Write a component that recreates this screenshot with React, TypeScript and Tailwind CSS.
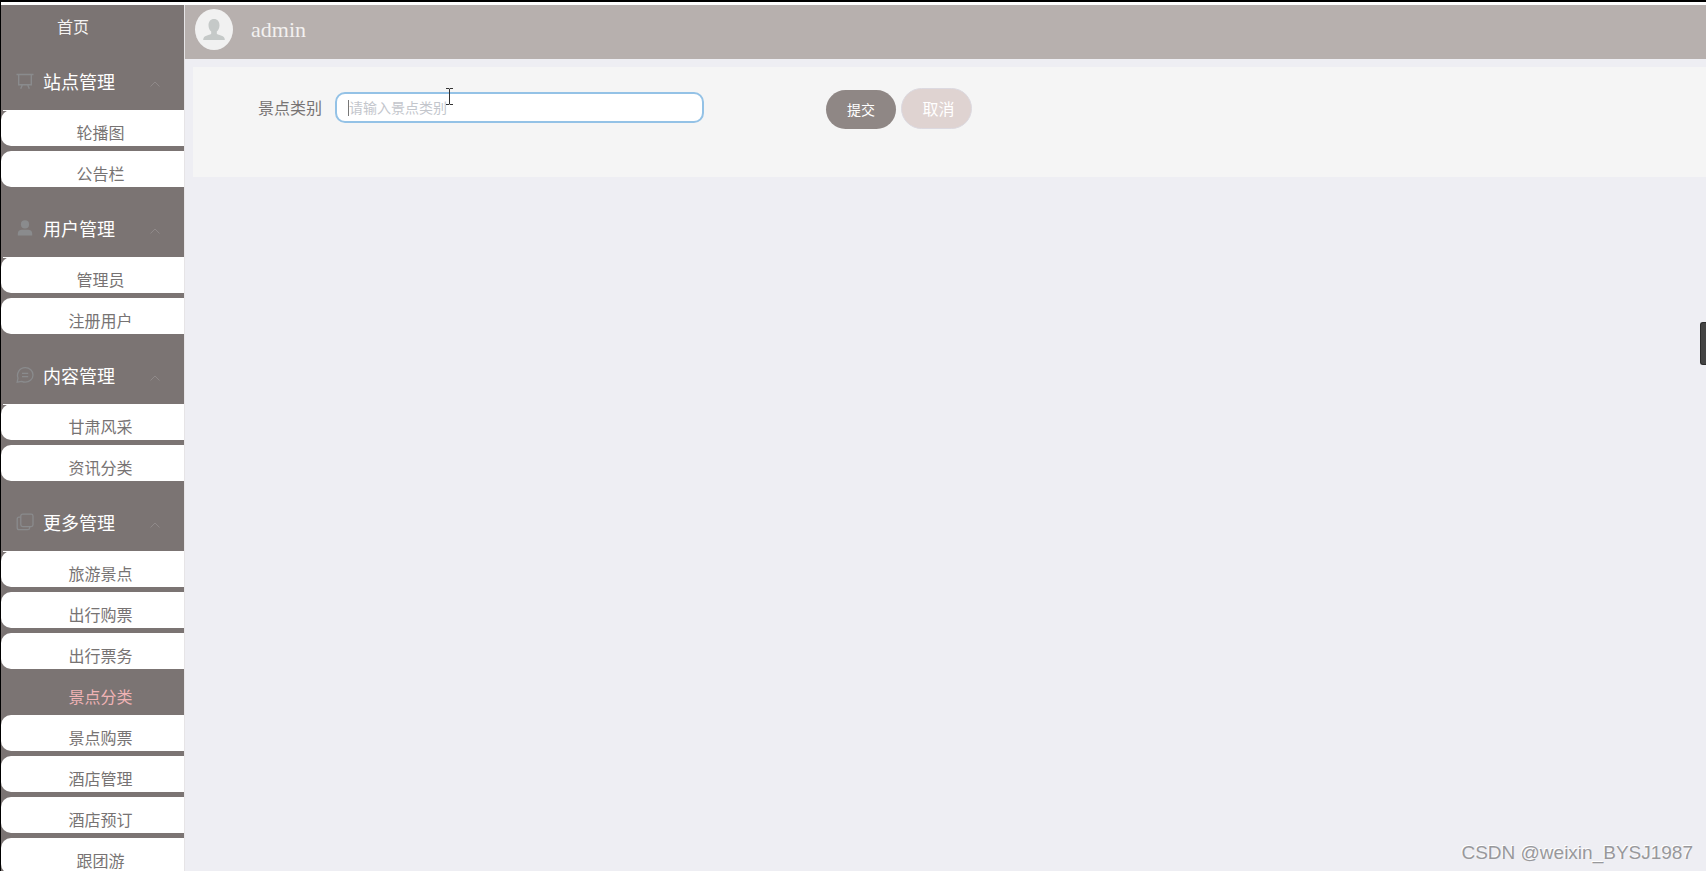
import type { ReactNode } from "react";

type MenuGroup = {
  title: string;
  icon: ReactNode;
  items: string[];
};

const iconClass = "h-[18px] w-[18px] shrink-0 text-[#8a8b8d]";

const BoardIcon = () => (
  <svg viewBox="0 0 18 18" className={iconClass} fill="none" stroke="currentColor" strokeWidth="1.4">
    <path d="M0.5 2.5h17M2.7 2.5v10.300h12.600V2.500M6.300 13l-1.600 3.700M11.700 13l1.600 3.700" />
  </svg>
);

const UserIcon = () => (
  <svg viewBox="0 0 18 18" className={iconClass} fill="currentColor">
    <circle cx="9" cy="5.4" r="4.1" />
    <path d="M1.8 16.4v-1.6c0-2.4 1.6-4 4-4h6.4c2.4 0 4 1.6 4 4v1.6z" />
  </svg>
);

const ChatIcon = () => (
  <svg viewBox="0 0 18 18" className={iconClass} fill="none" stroke="currentColor" strokeWidth="1.3">
    <path d="M1.2 16.2 2 12.1C0.2 7.2 3.5 1.7 9.2 1.7c4.4 0 7.8 3.2 7.8 7.2s-3.4 7.3-7.8 7.3c-1.3 0-2.4-.3-3.5-.8z" />
    <path d="M6 7.3h6.2M6 10.6h6.2" />
  </svg>
);

const CopyIcon = () => (
  <svg viewBox="0 0 18 18" className={iconClass} fill="none" stroke="currentColor" strokeWidth="1.3">
    <rect x="4.8" y="1.2" width="12.2" height="12.4" rx="1.8" />
    <path d="M4.5 4.2H3C1.9 4.2 1.2 4.9 1.2 6v8.8c0 1.2.7 1.9 1.9 1.9h8.6c1.2 0 1.9-.7 1.9-1.7v-1" />
  </svg>
);

const groups: MenuGroup[] = [
  { title: "站点管理", icon: <BoardIcon />, items: ["轮播图", "公告栏"] },
  { title: "用户管理", icon: <UserIcon />, items: ["管理员", "注册用户"] },
  { title: "内容管理", icon: <ChatIcon />, items: ["甘肃风采", "资讯分类"] },
  {
    title: "更多管理",
    icon: <CopyIcon />,
    items: ["旅游景点", "出行购票", "出行票务", "景点分类", "景点购票", "酒店管理", "酒店预订", "跟团游"],
  },
];

const activeItem = "景点分类";

function Sidebar() {
  return (
    <nav className="w-[184px] shrink-0 overflow-hidden border-r border-[#e6e4e6] bg-[#7b7473]">
      <a href="#home" className="flex h-[49px] items-center pb-2 pl-14 text-base text-[#f4f2f2]">
        首页
      </a>
      {groups.map((group) => (
        <section key={group.title} className="pb-[14px]">
          <button type="button" className="flex h-14 w-full items-center pb-[2px] pl-[15px] text-lg text-white">
            {group.icon}
            <span className="ml-[9px]">{group.title}</span>
            <svg
              viewBox="0 0 10 6"
              className="mt-[6px] mr-6 ml-auto h-[6px] w-[10px] text-[#8f8989]"
              fill="none"
              stroke="currentColor"
            >
              <path d="M0.5 5.5 5 1l4.5 4.5" />
            </svg>
          </button>
          <ul className="relative flex flex-col gap-[5px]">
            {group.items.map((item) => (
              <li key={item}>
                <a
                  href="#menu"
                  className={
                    item === activeItem
                      ? "flex h-9 items-center justify-center pt-[7px] pl-4 text-base text-[#f0b3b5]"
                      : "flex h-9 items-center justify-center rounded-l-[10px] bg-white pt-[7px] pl-4 text-base text-[#777373]"
                  }
                >
                  {item}
                </a>
              </li>
            ))}
            <li aria-hidden="true" className="absolute top-0 right-[2px] left-[2px] h-px bg-white" />
          </ul>
        </section>
      ))}
    </nav>
  );
}

function Header() {
  return (
    <header className="flex h-[54px] items-center bg-[#b7b0ae] pl-[10px]">
      <svg viewBox="0 0 38 41" className="mb-[6px] h-[41px] w-[38px]">
        <ellipse cx="19" cy="20.5" rx="19" ry="20.5" fill="#f1f1f1" />
        <path
          d="M19 10c3.5 0 5.5 2.6 5.5 6.2 0 2.8-1.2 5.2-2.7 6.4v2.200c0 .8 6.600 1.700 7.600 4.200.3.800.4 1.400.4 2H8.200c0-.6.1-1.200.4-2 1-2.500 7.600-3.400 7.600-4.200v-2.200c-1.500-1.200-2.700-3.600-2.700-6.400C13.500 12.600 15.500 10 19 10z"
          fill="#c5c9c8"
        />
      </svg>
      <span className="mb-[6px] ml-[18px] font-['Liberation_Serif',serif] text-[22px] text-[#f3f1f0]">admin</span>
    </header>
  );
}

function CategoryForm() {
  return (
    <form className="mt-2 ml-2 flex h-[110px] items-start bg-[#f5f5f5] pt-[21px] pl-[65px]">
      <div className="flex h-[38px] items-center">
        <label htmlFor="category" className="text-base text-[#777373]">
          景点类别
        </label>
        <div className="relative ml-[13px]">
          <input
            id="category"
            type="text"
            placeholder="请输入景点类别"
            className="block h-[31px] w-[369px] rounded-[10px] border-2 border-[#94c2e6] bg-white px-3 text-sm text-[#606266] outline-none placeholder:text-[#c3c6cc]"
          />
          <span className="absolute top-2 left-[13px] h-4 w-px bg-[#777]" />
          <svg
            viewBox="0 0 9 17"
            className="absolute -top-1 left-[110px] h-[17px] w-[9px]"
            fill="none"
            stroke="#333"
          >
            <path d="M1 .5h3l.5.5.5-.5h3M4.5 1v15M1 16.5h3l.5-.5.5.5h3" />
          </svg>
        </div>
      </div>
      <div className="ml-[122px] flex items-end gap-[5px]">
        <button type="button" className="h-[39px] w-[70px] rounded-full bg-[#8f8785] pb-[2px] text-sm text-white">
          提交
        </button>
        <button
          type="button"
          className="h-[41px] w-[71px] rounded-full border border-[#dcd9e0] bg-[#dfd3d1] pb-[2px] pl-1 text-base text-white"
        >
          取消
        </button>
      </div>
    </form>
  );
}

export default function App() {
  return (
    <div className="relative flex h-screen flex-col overflow-hidden border-t-2 border-l border-black bg-white pt-[3px] font-['Noto_Sans_CJK_SC',sans-serif]">
      <div className="flex min-h-0 flex-1">
        <Sidebar />
        <main className="min-w-0 flex-1 bg-[#eeeef3]">
          <Header />
          <CategoryForm />
        </main>
      </div>
      <div className="absolute top-[320px] right-0 h-[43px] w-[6px] rounded-l-[3px] border border-r-0 border-[#2c2c2c] bg-[#444]" />
      <p className="absolute right-[13px] bottom-1 font-['Liberation_Sans',sans-serif] text-[19px] text-[#98989b] [text-shadow:-1px_-1px_0_#fff]">
        CSDN @weixin_BYSJ1987
      </p>
    </div>
  );
}
